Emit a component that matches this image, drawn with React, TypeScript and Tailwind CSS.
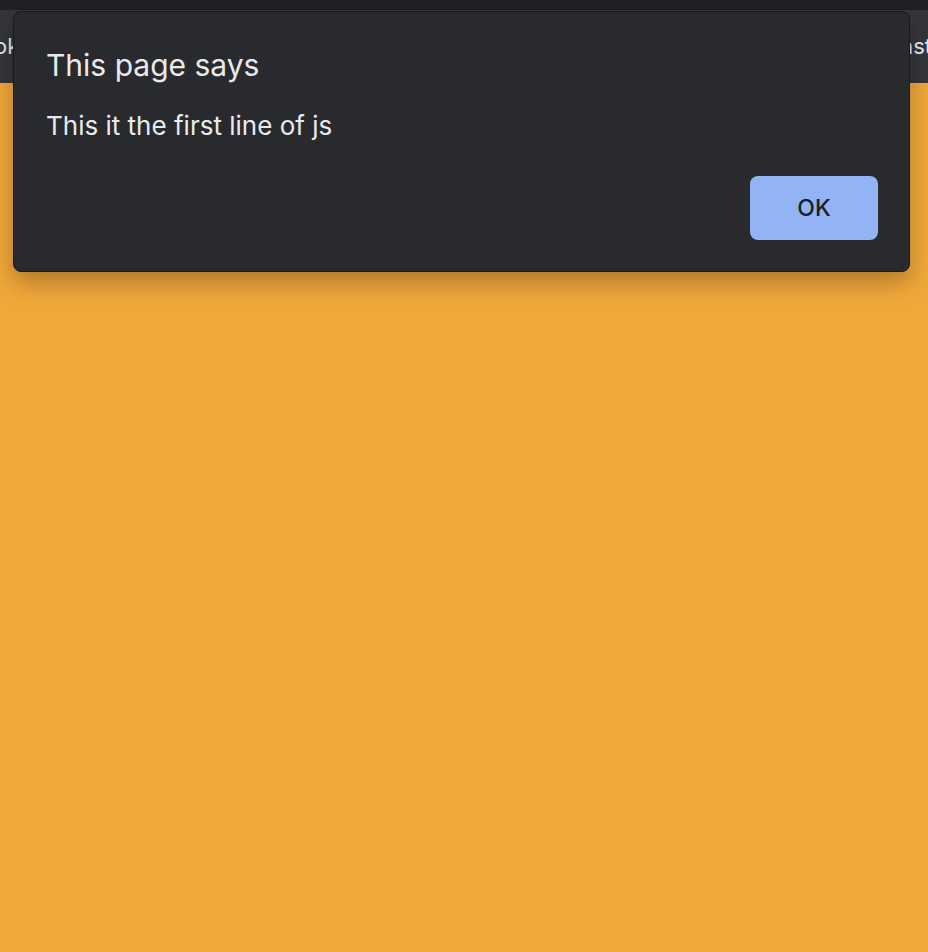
import React from 'react';

export default function App() {
  return (
    <div className="relative w-[928px] h-[952px] bg-[#f0a83a] overflow-hidden" style={{ fontFamily: 'Inter, "Noto Sans", sans-serif' }}>
      <div className="h-[10px] bg-[#202124]" />
      <div className="h-[73px] bg-[#35363a] flex items-center justify-between text-[22px] text-[#e8eaed]">
        <span className="-ml-[6px]">ok</span>
        <span className="-mr-[4px]">ast</span>
      </div>

      <div className="absolute left-[13px] top-[11px] w-[897px] h-[261px] rounded-[8px] bg-[#292a2d] border border-[#1a1a1c] shadow-[0_10px_24px_rgba(0,0,0,0.28)] pl-[32px] pr-[31px] pt-[33px]">
        <h1 className="text-[30px] leading-[40px] text-[#e8eaed]">This page says</h1>
        <p className="mt-[23px] text-[26px] leading-[36px] text-[#e8eaed]">This it the first line of js</p>
        <div className="flex justify-end mt-[32px]">
          <button className="w-[128px] h-[64px] rounded-[8px] bg-[#92b4f4] text-[#202124] text-[23px] font-medium">
            OK
          </button>
        </div>
      </div>
    </div>
  );
}
